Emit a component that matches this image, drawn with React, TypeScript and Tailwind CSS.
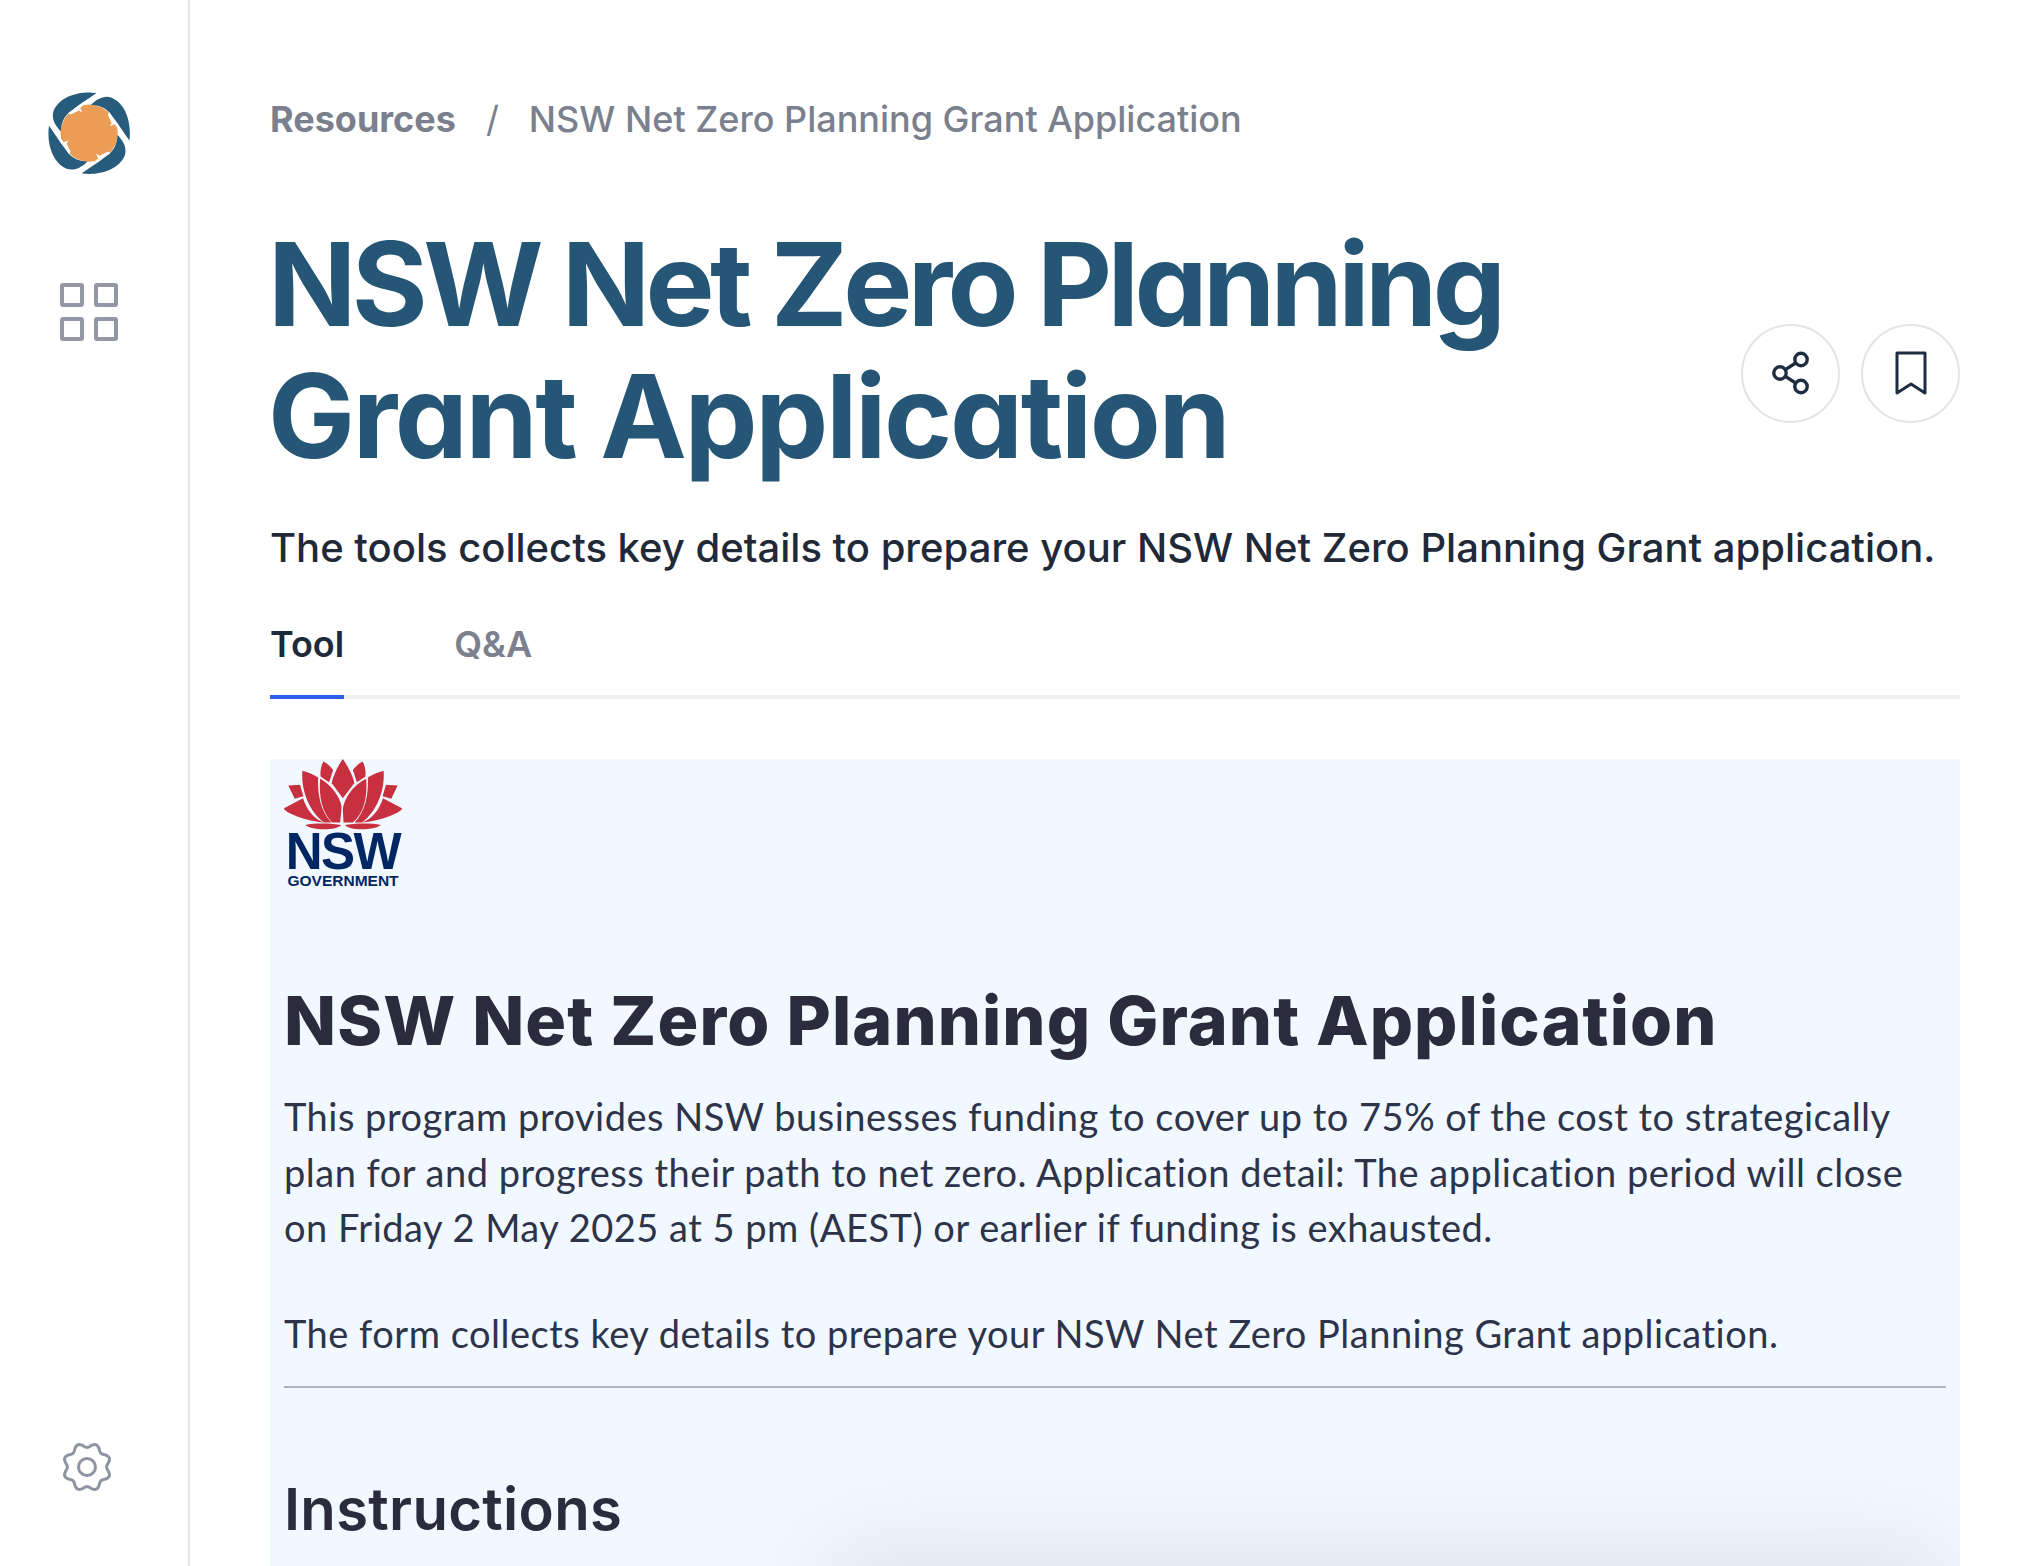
import React from "react";

function Logo() {
  const blade = "M290 127 C240 120 180 135 160 180 C152 205 165 225 182 243 C182 220 190 200 205 187 L238 162 Z";
  return (
    <svg viewBox="144 124 248 250" className="block w-[83px] h-[83px]">
      <circle cx="267" cy="248" r="86" fill="#ec9d55" />
      {[0, 90, 180, 270].map((r) => (
        <g key={r} transform={`rotate(${r} 267 248)`}>
          <path d={blade} fill="#285c7c" />
          <path d="M203 188 L232 168 L246 160 L290 127 L296 124 L240 172 L246 186 L236 180 L212 192 Z" fill="#fff" />
        </g>
      ))}
    </svg>
  );
}

function GridIcon() {
  return (
    <svg viewBox="0 0 58 58" className="block w-[58px] h-[58px]" fill="none" stroke="#9497a6" strokeWidth="4">
      <rect x="2" y="2" width="20" height="20" rx="1" />
      <rect x="36" y="2" width="20" height="20" rx="1" />
      <rect x="2" y="36" width="20" height="20" rx="1" />
      <rect x="36" y="36" width="20" height="20" rx="1" />
    </svg>
  );
}

function GearIcon() {
  const pts: string[] = [];
  for (let i = 0; i < 240; i++) {
    const t = (i / 240) * Math.PI * 2;
    const r = 21.8 + 2.2 * Math.cos(8 * t + Math.PI);
    pts.push(`${(28 + r * Math.sin(t)).toFixed(2)} ${(28 - r * Math.cos(t)).toFixed(2)}`);
  }
  return (
    <svg viewBox="0 0 56 56" className="block w-[56px] h-[56px]" fill="none" stroke="#8f94a3" strokeWidth="3">
      <path d={`M${pts.join(" L")} Z`} />
      <circle cx="28" cy="28" r="8.5" />
    </svg>
  );
}

function ShareIcon() {
  return (
    <svg viewBox="0 0 40 46" className="block w-[40px] h-[46px]" fill="none" stroke="#1f2d42" strokeWidth="3.4">
      <circle cx="9" cy="23" r="6.2" />
      <circle cx="30" cy="9.5" r="6.2" />
      <circle cx="30" cy="36.5" r="6.2" />
      <path d="M14.4 19.6 L24.6 13 M14.4 26.4 L24.6 33" />
    </svg>
  );
}

function BookmarkIcon() {
  return (
    <svg viewBox="0 0 32 44" className="block w-[32px] h-[44px]" fill="none" stroke="#1f2d42" strokeWidth="3" strokeLinejoin="round">
      <path d="M2 2 H30 V42 L16 33 L2 42 Z" />
    </svg>
  );
}

function Waratah() {
  const side = (
    <>
      <path d="M190 60 C198 64 212 76 219 86 L207 122 L182 106 C179 92 183 72 190 60Z" />
      <path d="M127 88 C142 92 162 100 174 108 C172 160 182 210 214 243 L192 243 C150 212 122 150 127 88Z" />
      <path d="M85 132 L120 130 L130 164 L104 172 Z" />
      <path d="M72 200 L129 170 C140 205 162 232 192 243 C150 238 100 225 74 205Z" />
      <path d="M135 250 C165 243 220 245 243 250 C232 266 160 268 135 250Z" />
    </>
  );
  return (
    <svg viewBox="72 53 353 215" className="block w-[118px] h-[72px]" fill="#c8303f">
      <path d="M248 53 C232 75 216 110 215 125 L248 170 L282 125 C281 110 264 75 248 53Z" />
      <g>{side}</g>
      <g transform="translate(497 0) scale(-1 1)">{side}</g>
      <path d="M180 112 C215 130 245 175 244 200 L240 243 L216 243 C186 212 176 170 180 112Z" />
      <path d="M318 112 C280 130 250 172 248 205 L250 243 L278 243 C310 215 322 170 318 112Z" />
    </svg>
  );
}

export default function App() {
  return (
    <div className="flex h-[1566px] w-[2030px] overflow-hidden bg-white font-['Inter',sans-serif]">
      <aside className="flex w-[190px] shrink-0 flex-col items-center border-r-2 border-[#e5e5e8] pt-[92px] pb-[71px] pr-[10px]">
        <Logo />
        <div className="mt-[108px]"><GridIcon /></div>
        <div className="mt-auto -ml-[4px]"><GearIcon /></div>
      </aside>
      <main className="min-w-0 flex-1 pl-[80px] pr-[70px] pt-[96px]">
        <nav className="flex items-center text-[36px] leading-[46px] text-[#7a808d]">
          <span className="font-bold">Resources</span>
          <span className="mx-[30px]">/</span>
          <span className="font-medium">NSW Net Zero Planning Grant Application</span>
        </nav>
        <div className="mt-[76px] flex items-center justify-between">
          <h1 className="-ml-[2px] w-[1300px] text-[116px] font-bold leading-[132px] text-[#255675] [font-feature-settings:'cv11']">
            <span className="block tracking-[-4.6px]">NSW Net Zero Planning</span>
            <span className="block tracking-[-2.4px]">Grant Application</span>
          </h1>
          <div className="mt-[46px] flex gap-[21px]">
            <button className="flex h-[99px] w-[99px] items-center justify-center rounded-full border-2 border-[#e4e4e4]">
              <ShareIcon />
            </button>
            <button className="flex h-[99px] w-[99px] items-center justify-center rounded-full border-2 border-[#e4e4e4]">
              <BookmarkIcon />
            </button>
          </div>
        </div>
        <p className="mt-[40px] text-[40px] font-medium leading-[52px] text-[#1f2937]">
          The tools collects key details to prepare your NSW Net Zero Planning Grant application.
        </p>
        <div className="mt-[37px] flex h-[88px] gap-[110px] border-b-4 border-[#f1f1f1] text-[36px] font-semibold">
          <div className="-mb-[4px] border-b-4 border-[#2b5fec] pt-[6px] text-[#1d2939]">Tool</div>
          <div className="pt-[6px] text-[#7a808d]">Q&amp;A</div>
        </div>
        <section className="relative mt-[60px] h-[900px] overflow-hidden bg-[#f1f8ff] px-[14px]">
          <div className="flex w-[118px] flex-col items-center">
            <Waratah />
            <div className="-mt-[1px] font-['Liberation_Sans',sans-serif] text-[51px] font-bold leading-[44px] tracking-[-0.03em] text-[#002664]">NSW</div>
            <div className="font-['Liberation_Sans',sans-serif] text-[15.5px] font-bold leading-[14px] text-[#002664]">GOVERNMENT</div>
          </div>
          <h2 className="mt-[92px] text-[68px] font-extrabold leading-[80px] tracking-[1.1px] text-[#2a2b3d]">NSW Net Zero Planning Grant Application</h2>
          <p className="mt-[29px] font-['Lato',sans-serif] text-[38px] leading-[55.7px] tracking-[0.5px] text-[#2d3348]">
            This program provides NSW businesses funding to cover up to 75% of the cost to strategically plan for and progress their path to net zero. Application detail: The application period will close on Friday 2 May 2025 at 5 pm (AEST) or earlier if funding is exhausted.
          </p>
          <p className="mt-[50px] font-['Lato',sans-serif] text-[38px] leading-[55.7px] tracking-[0.5px] text-[#2d3348]">
            The form collects key details to prepare your NSW Net Zero Planning Grant application.
          </p>
          <hr className="mt-[24px] border-t-2 border-[#adb5c6]" />
          <h3 className="mt-[85px] text-[58px] font-semibold leading-[72px] tracking-[0.3px] text-[#2a2b3d]">Instructions</h3>
          <div className="absolute left-[555px] top-[790px] h-[100px] w-[1125px] rounded-[50px] bg-[#dfe3ec] blur-[40px]" />
        </section>
      </main>
    </div>
  );
}
